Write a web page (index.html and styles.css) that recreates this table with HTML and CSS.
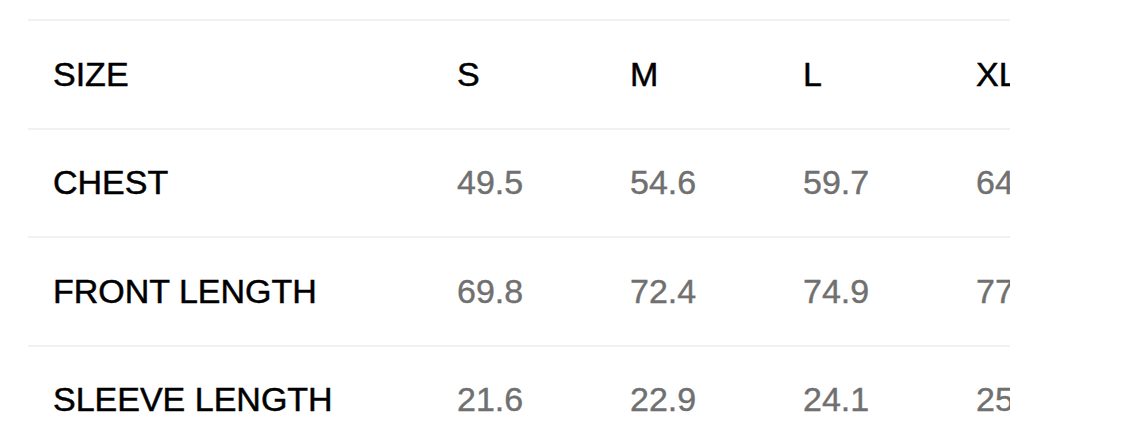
FILE: index.html
```html
<!DOCTYPE html>
<html lang="en">
<head>
<meta charset="utf-8">
<title>Size chart</title>
<link rel="stylesheet" href="styles.css">
</head>
<body>
<div class="sheet">
  <div class="row head">
    <div class="label">SIZE</div>
    <div class="cell">S</div>
    <div class="cell">M</div>
    <div class="cell">L</div>
    <div class="cell">XL</div>
  </div>
  <div class="row">
    <div class="label">CHEST</div>
    <div class="cell val">49.5</div>
    <div class="cell val">54.6</div>
    <div class="cell val">59.7</div>
    <div class="cell val">64.8</div>
  </div>
  <div class="row">
    <div class="label">FRONT LENGTH</div>
    <div class="cell val">69.8</div>
    <div class="cell val">72.4</div>
    <div class="cell val">74.9</div>
    <div class="cell val">77.5</div>
  </div>
  <div class="row">
    <div class="label">SLEEVE LENGTH</div>
    <div class="cell val">21.6</div>
    <div class="cell val">22.9</div>
    <div class="cell val">24.1</div>
    <div class="cell val">25.4</div>
  </div>
</div>
</body>
</html>
```

FILE: styles.css
```css
html, body {
  margin: 0;
  padding: 0;
  background: #ffffff;
}

body {
  font-family: "Liberation Sans", Arial, sans-serif;
  color: #000;
  overflow: hidden;
}

.sheet {
  margin-left: 28px;
  width: 982px;
  padding-top: 19px;
  overflow: hidden;
}

.row {
  display: grid;
  grid-template-columns: 429px 173px 173px 173px 173px;
  width: max-content;
  min-width: 100%;
  height: 106.5px;
  border-top: 2px solid #f1f1f1;
  align-items: center;
  font-size: 34px;
}

.label {
  padding-left: 25px;
  white-space: nowrap;
  -webkit-text-stroke: 0.5px #000;
}

.cell {
  white-space: nowrap;
  -webkit-text-stroke: 0.5px #000;
}

.val {
  color: #707070;
  -webkit-text-stroke: 0.4px #707070;
}
```
